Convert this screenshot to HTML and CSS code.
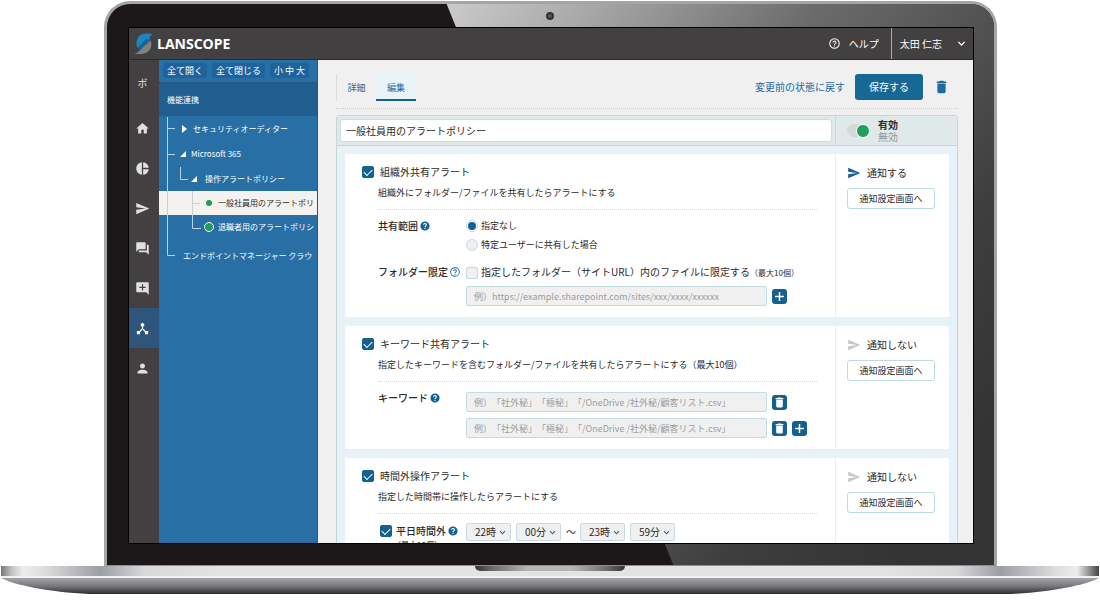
FILE: index.html
```html
<!DOCTYPE html>
<html lang="ja">
<head>
<meta charset="utf-8">
<meta name="viewport" content="width=device-width, initial-scale=1">
<title>LANSCOPE</title>
<link rel="stylesheet" href="styles.css">
</head>
<body>
<svg class="defs" aria-hidden="true">
  <symbol id="i-home" viewBox="0 0 24 24"><path d="M10 20v-6h4v6h5v-8h3L12 3 2 12h3v8z"/></symbol>
  <symbol id="i-pie" viewBox="0 0 24 24"><path d="M11 2v20c-5.07-.5-9-4.79-9-10s3.93-9.5 9-10zm2.03 0v8.99H22c-.47-4.74-4.24-8.52-8.97-8.99zm0 11.01V22c4.74-.47 8.5-4.25 8.97-8.99z"/></symbol>
  <symbol id="i-send" viewBox="0 0 24 24"><path d="M2.01 21L23 12 2.01 3 2 10l15 2-15 2z"/></symbol>
  <symbol id="i-forum" viewBox="0 0 24 24"><path d="M21 6h-2v9H6v2c0 .55.45 1 1 1h11l4 4V7c0-.55-.45-1-1-1zm-4 6V3c0-.55-.45-1-1-1H3c-.55 0-1 .45-1 1v14l4-4h10c.55 0 1-.45 1-1z"/></symbol>
  <symbol id="i-addchat" viewBox="0 0 24 24"><path d="M22 4c0-1.1-.9-2-2-2H4c-1.1 0-2 .9-2 2v12c0 1.1.9 2 2 2h14l4 4zM17 11h-4v4h-2v-4H7V9h4V5h2v4h4z"/></symbol>
  <symbol id="i-hub" viewBox="0 0 24 24"><path d="M17 16l-4-4V8.82C14.16 8.4 15 7.3 15 6c0-1.66-1.34-3-3-3S9 4.34 9 6c0 1.3.84 2.4 2 2.82V12l-4 4H3v5h5v-3.05l4-4.2 4 4.2V21h5v-5z"/></symbol>
  <symbol id="i-person" viewBox="0 0 24 24"><path d="M12 12c2.21 0 4-1.79 4-4s-1.79-4-4-4-4 1.79-4 4 1.79 4 4 4zm0 2c-2.67 0-8 1.34-8 4v2h16v-2c0-2.66-5.33-4-8-4z"/></symbol>
  <symbol id="i-trash" viewBox="4 2 16 20"><path d="M6 19c0 1.100.9 2 2 2h8c1.100 0 2-.9 2-2V7H6zM19 4h-3.500l-1-1h-5l-1 1H5v2h14z"/></symbol>
  <symbol id="i-help" viewBox="0 0 24 24"><path d="M12 1a11 11 0 1 0 0 22 11 11 0 0 0 0-22zm1.200 18h-2.500v-2.500h2.500zm2.300-7.500l-.9.900c-.8.800-1.300 1.400-1.300 2.800h-2.600v-.6c0-1.100.5-2.100 1.200-2.800l1.200-1.300c.4-.3.600-.8.600-1.400 0-1.100-.9-1.900-1.900-1.900s-2 .8-2 1.900H7.300c0-2.400 2.100-4.400 4.700-4.400s4.600 2 4.600 4.300c0 1-.4 1.800-1.100 2.500z"/></symbol>
  <symbol id="i-helpo" viewBox="1 1 22 22"><path d="M11 18h2v-2h-2zm1-16.500a10.500 10.500 0 1 0 0 21 10.500 10.500 0 0 0 0-21zm0 19a8.500 8.500 0 1 1 0-17 8.500 8.500 0 0 1 0 17zm0-14.500c-2.210 0-4 1.790-4 4h2c0-1.100.9-2 2-2s2 .9 2 2c0 2-3 1.750-3 5h2c0-2.250 3-2.500 3-5 0-2.210-1.790-4-4-4z"/></symbol>
  <symbol id="i-plus" viewBox="0 0 12 12"><path d="M5.200 1.200h1.600v4h4v1.600h-4v4H5.200v-4h-4V5.200h4z"/></symbol>
  <symbol id="i-chev" viewBox="0 0 10 10"><path d="M1.500 3.200L5 6.800l3.500-3.600" fill="none" stroke="currentColor" stroke-width="1.500"/></symbol>
</svg>

<div class="laptop">
  <div class="lid">
    <svg class="glare" viewBox="0 0 888 562" preserveAspectRatio="none" aria-hidden="true">
      <defs>
        <linearGradient id="shine" gradientUnits="userSpaceOnUse" x1="343" y1="0" x2="893" y2="400">
          <stop offset="0" stop-color="#cacaca"/><stop offset=".155" stop-color="#ababab"/><stop offset=".44" stop-color="#6b6b6b"/>
          <stop offset=".65" stop-color="#525252"/><stop offset=".73" stop-color="#484848"/><stop offset=".81" stop-color="#3e3e3e"/><stop offset="1" stop-color="#343434"/>
        </linearGradient>
      </defs>
      <path d="M340 0H888V562H567z" fill="url(#shine)"/>
    </svg>
    <div class="camera"></div>
    <div class="screen">
      <header class="topbar">
        <div class="brand">
          <svg class="logo" viewBox="0 0 19 22" aria-hidden="true">
            <path d="M16.500 7.500c2 4.200.5 9.200-3 11.500-3 2-7 2.300-13 1.800 3-1 4.500-2.300 6-4.300z" fill="#7f827f"/>
            <path d="M18.500 1C12 0 8 .5 5.600 2.800 2.500 5.800 1.500 10.500 3.500 14.700l2.800 2L15.500 7.500c-.4-2.500.6-4.500 3-6.500z" fill="#1d87c4"/>
            <path d="M3.500 14.700l9.200-9.200 2.800 2-9.200 9.200z" fill="#176596"/>
          </svg>
          <span class="brand-name">LANSCOPE</span>
        </div>
        <a class="help-link" href="#"><svg class="ic12"><use href="#i-helpo"/></svg>ヘルプ</a>
        <button class="user" type="button">太田 仁志<svg class="ic9"><use href="#i-chev"/></svg></button>
      </header>
      <div class="body">
        <nav class="rail">
          <a class="rail-first" href="#">ボ</a>
          <a href="#" aria-label="ホーム"><svg><use href="#i-home"/></svg></a>
          <a href="#" aria-label="レポート"><svg><use href="#i-pie"/></svg></a>
          <a href="#" aria-label="送信"><svg><use href="#i-send"/></svg></a>
          <a href="#" aria-label="チャット"><svg><use href="#i-forum"/></svg></a>
          <a href="#" aria-label="追加"><svg><use href="#i-addchat"/></svg></a>
          <a class="active" href="#" aria-label="連携"><svg><use href="#i-hub"/></svg></a>
          <a href="#" aria-label="アカウント"><svg><use href="#i-person"/></svg></a>
        </nav>
        <aside class="tree">
          <div class="tree-tools">
            <button type="button">全て開く</button>
            <button type="button">全て閉じる</button>
            <button class="sizes" type="button">小 中 大</button>
          </div>
          <h2 class="tree-head">機能連携</h2>
          <div class="tree-body">
            <a class="node n1" href="#"><svg class="mark" viewBox="0 0 7 8"><path d="M1 0l5 4-5 4z"/></svg>セキュリティオーディター</a>
            <a class="node n2" href="#"><svg class="mark" viewBox="0 0 7 8"><path d="M6 1v6H0z"/></svg>Microsoft 365</a>
            <a class="node n3" href="#"><svg class="mark" viewBox="0 0 7 8"><path d="M6 1v6H0z"/></svg>操作アラートポリシー</a>
            <a class="node n4 selected" href="#"><span class="dot"></span>一般社員用のアラートポリ</a>
            <a class="node n4" href="#"><span class="dot ring"></span>退職者用のアラートポリシ</a>
            <a class="node n5" href="#">エンドポイントマネージャー クラウ</a>
            <svg class="guides" viewBox="0 0 50 150" aria-hidden="true">
              <path d="M8.500 1V139.500H16M8.500 12.500H16M8.500 38.500H16M21.500 51V63.500H29M33.500 99V112.500H42" stroke="#b9d2e6"/>
              <path d="M8.500 75V99M33.500 75V99M33.500 87.500H41" stroke="#c9cfd2"/>
            </svg>
          </div>
        </aside>
        <main class="main">
          <div class="toolbar">
            <a class="tab" href="#">詳細</a>
            <a class="tab current" href="#">編集</a>
            <a class="revert" href="#">変更前の状態に戻す</a>
            <button class="save" type="button">保存する</button>
            <button class="delete" type="button" aria-label="削除"><svg><use href="#i-trash"/></svg></button>
          </div>
          <section class="panel">
            <div class="panel-head">
              <div class="name-cell"><input class="name" type="text" value="一般社員用のアラートポリシー" aria-label="ポリシー名"></div>
              <div class="state-cell">
                <input class="switch" id="enabled" type="checkbox" role="switch" checked>
                <label class="state" for="enabled"><b>有効</b><span>無効</span></label>
              </div>
            </div>
            <div class="cards">
              <article class="card">
                <div class="card-main">
                  <label class="card-title"><input class="check" type="checkbox" checked>組織外共有アラート</label>
                  <p class="desc">組織外にフォルダー/ファイルを共有したらアラートにする</p>
                  <div class="fields">
                    <div class="label">共有範囲<svg class="ic10"><use href="#i-help"/></svg></div>
                    <div class="stack radios">
                      <label class="opt"><input class="radio" type="radio" name="range" checked>指定なし</label>
                      <label class="opt"><input class="radio" type="radio" name="range">特定ユーザーに共有した場合</label>
                    </div>
                    <div class="label">フォルダー限定<svg class="ic10"><use href="#i-helpo"/></svg></div>
                    <div class="stack">
                      <label class="opt wide"><input class="check" type="checkbox"><span>指定したフォルダー（サイトURL）内のファイルに限定する<small>（最大10個）</small></span></label>
                      <div class="entry"><input class="text" type="text" placeholder="例）https://example.sharepoint.com/sites/xxx/xxxx/xxxxxx" aria-label="サイトURL"><button class="sq" type="button" aria-label="追加"><svg><use href="#i-plus"/></svg></button></div>
                    </div>
                  </div>
                </div>
                <div class="card-side">
                  <p class="notify on"><svg class="ic14"><use href="#i-send"/></svg>通知する</p>
                  <button class="goto" type="button">通知設定画面へ</button>
                </div>
              </article>

              <article class="card">
                <div class="card-main">
                  <label class="card-title"><input class="check" type="checkbox" checked>キーワード共有アラート</label>
                  <p class="desc">指定したキーワードを含むフォルダー/ファイルを共有したらアラートにする（最大10個）</p>
                  <div class="fields">
                    <div class="label">キーワード<svg class="ic10"><use href="#i-help"/></svg></div>
                    <div class="stack entries">
                      <div class="entry"><input class="text" type="text" placeholder="例）「社外秘」「極秘」「/OneDrive /社外秘/顧客リスト.csv」" aria-label="キーワード1"><button class="sq" type="button" aria-label="削除"><svg><use href="#i-trash"/></svg></button></div>
                      <div class="entry"><input class="text" type="text" placeholder="例）「社外秘」「極秘」「/OneDrive /社外秘/顧客リスト.csv」" aria-label="キーワード2"><button class="sq" type="button" aria-label="削除"><svg><use href="#i-trash"/></svg></button><button class="sq" type="button" aria-label="追加"><svg><use href="#i-plus"/></svg></button></div>
                    </div>
                  </div>
                </div>
                <div class="card-side">
                  <p class="notify"><svg class="ic14"><use href="#i-send"/></svg>通知しない</p>
                  <button class="goto" type="button">通知設定画面へ</button>
                </div>
              </article>

              <article class="card">
                <div class="card-main">
                  <label class="card-title"><input class="check" type="checkbox" checked>時間外操作アラート</label>
                  <p class="desc">指定した時間帯に操作したらアラートにする</p>
                  <div class="fields">
                    <div class="label with-check">
                      <label><input class="check" type="checkbox" checked>平日時間外</label><svg class="ic10"><use href="#i-help"/></svg>
                      <small>（最大10個）</small>
                    </div>
                    <div class="times">
                      <span class="pick"><select aria-label="開始時"><option>22時</option></select><svg class="ic7"><use href="#i-chev"/></svg></span>
                      <span class="pick"><select aria-label="開始分"><option>00分</option></select><svg class="ic7"><use href="#i-chev"/></svg></span>
                      <span class="tilde">～</span>
                      <span class="pick"><select aria-label="終了時"><option>23時</option></select><svg class="ic7"><use href="#i-chev"/></svg></span>
                      <span class="pick"><select aria-label="終了分"><option>59分</option></select><svg class="ic7"><use href="#i-chev"/></svg></span>
                    </div>
                  </div>
                </div>
                <div class="card-side">
                  <p class="notify"><svg class="ic14"><use href="#i-send"/></svg>通知しない</p>
                  <button class="goto" type="button">通知設定画面へ</button>
                </div>
              </article>
            </div>
          </section>
        </main>
      </div>
    </div>
  </div>
  <div class="base"><div class="notch"></div>
    <div class="deck"></div>
    <svg class="under" viewBox="0 0 1098 16" preserveAspectRatio="none" aria-hidden="true">
      <defs><linearGradient id="under" x2="0" y2="1"><stop offset="0" stop-color="#a3a4a8"/><stop offset=".5" stop-color="#77787a"/><stop offset="1" stop-color="#2e2e2e"/></linearGradient></defs>
      <path d="M0 0H1098C1085 7 1050 14 1010 16H88C48 14 13 7 0 0z" fill="url(#under)"/>
    </svg>
  </div>
</div>
</body>
</html>
```

FILE: styles.css
```css
* { box-sizing: border-box; }
body {
  margin: 0;
  background: #fff;
  color: #2b2b2b;
  font: 10px/18px "Noto Sans CJK JP", "Noto Sans", sans-serif;
  text-spacing-trim: space-all;
}
h2, p { margin: 0; font-size: inherit; font-weight: inherit; }
a { color: inherit; text-decoration: none; }
button, input, select { font: inherit; color: inherit; margin: 0; padding: 0; text-spacing-trim: inherit; }
button { display: flex; align-items: center; justify-content: center; border: 0; background: none; cursor: pointer; white-space: nowrap; }
svg { display: block; flex: none; fill: currentColor; }
.defs { position: absolute; width: 0; height: 0; }

/* Laptop frame */
.laptop { display: flex; flex-direction: column; height: 100vh; padding: 1px 1px 22px; }
.lid {
  position: relative;
  display: flex;
  flex: 1;
  min-height: 0;
  margin: 0 102px 0 103px;
  padding: 23px 20px 21px 21px;
  border: 3px solid #a5a5a5;
  border-bottom: 1px solid #8d8d8d;
  border-radius: 26px 26px 0 0;
  background: #1c1718;
  overflow: hidden;
}
.glare { position: absolute; inset: 0; width: 100%; height: 100%; }
.camera {
  position: absolute;
  top: 8px;
  left: 50%;
  width: 8px;
  height: 8px;
  margin-left: -5px;
  border: 2px solid #333;
  border-radius: 50%;
  background: #555;
}
.screen {
  position: relative;
  display: flex;
  flex: 1;
  flex-direction: column;
  min-width: 0;
  border: 1px solid #000;
  background: #434041;
  overflow: hidden;
}
.base { position: relative; }
.deck {
  height: 12px;
  border-bottom: 2px solid #f0f0f2;
  background: linear-gradient(90deg, #777 0, #c4c4c4 1%, #ededed 2%, #dcdcdc 4%, #9b9ea3 9%, #d8d8da 13%, #e3e3e6 20%, #e3e3e6 80%, #d8d8da 87%, #9b9ea3 91%, #dcdcdc 96%, #ededed 98%, #999 99%, #444 100%);
}
.under { width: 100%; height: 16px; }
.notch {
  position: absolute;
  top: 0;
  left: 50%;
  width: 150px;
  height: 5px;
  margin-left: -75px;
  border-radius: 0 0 6px 6px;
  background: linear-gradient(90deg, #333, #6d6d6d 12%, #b5b5b7 35%, #b5b5b7 65%, #6d6d6d 88%, #333);
}

/* Top bar */
.topbar { display: flex; flex: none; height: 32px; border-bottom: 1px solid #2c2a2b; color: #fff; }
.brand { display: flex; flex: 1; align-items: center; gap: 4px; padding-left: 5px; }
.logo { width: 19px; height: 22px; }
.brand-name { font: 700 14px/20px "Open Sans", sans-serif; }
.help-link { display: flex; align-items: center; gap: 9px; padding-right: 12px; }
.user { gap: 15px; padding: 0 7px 0 8px; border-left: 1px solid #aaa; }
.ic7 { width: 7px; height: 7px; }
.ic9 { width: 9px; height: 9px; }
.ic10 { width: 10px; height: 10px; color: #14629a; }
.ic12 { width: 11px; height: 11px; }
.ic14 { width: 14px; height: 14px; }

.body { display: flex; flex: 1; min-height: 0; }
.rail { flex: none; width: 30px; color: #e0e0e0; }
.rail a { display: flex; align-items: center; justify-content: center; height: 40px; padding-right: 3px; }
.rail .rail-first { height: 48px; padding-bottom: 2px; }
.rail .active { background: #30557d; color: #fff; }
.rail svg { width: 15px; height: 15px; }

/* Tree */
.tree { flex: none; width: 159px; border-right: 1px solid #1a5b92; background: #286fa5; color: #fff; font-size: 8px; overflow: hidden; white-space: nowrap; }
.tree-tools { display: flex; gap: 5px; height: 23px; padding: 3px 4px; border-bottom: 1px dotted #17466f; background: #2470a7; font-size: 9px; }
.tree-tools button { height: 15px; padding: 0 4px; border-radius: 3px; background: #1f639a; }
.tree-head { height: 33px; padding-left: 8px; background: #215f90; line-height: 33px; }
.tree-body { position: relative; }
.node { display: flex; align-items: center; height: 25px; }
.n1 { padding-left: 22px; gap: 5px; }
.n2 { padding-left: 21px; gap: 4px; }
.n3 { padding-left: 32px; gap: 7px; }
.n4 { height: 24px; padding-left: 45px; gap: 4px; }
.n5 { margin-top: 4px; padding-left: 24px; }
.selected { background: #f3f2ef; color: #2b2b2b; }
.mark { width: 7px; height: 8px; }
.dot { width: 10px; height: 10px; border: 2px solid transparent; border-radius: 50%; background: #1f9d58; background-clip: padding-box; }
.ring { border: 1px solid #fff; }
.guides { position: absolute; top: 0; left: 0; width: 50px; height: 150px; fill: none; pointer-events: none; }

/* Main */
.main { flex: 1; min-width: 0; padding: 0 15px 0 18px; background: #f0f0f0; overflow: hidden; }
.toolbar { display: flex; align-items: center; height: 49px; padding: 6px 11px 0 0; border-bottom: 1px dotted #c3d3d3; color: #1d6ba0; }
.tab { width: 40px; height: 27px; border-left: 1px solid #dcdcdc; font-size: 9px; line-height: 27px; text-align: center; }
.current { border-left: 0; border-bottom: 2px solid #145f93; background: #e8f4f8; }
.revert { margin-left: auto; }
.save { width: 68px; height: 26px; margin: 0 13px 0 10px; border-radius: 3px; background: #176895; color: #fff; }
.delete svg { width: 11px; height: 14px; }
.panel { margin-top: 6px; border: 1px solid #c8d4d6; border-radius: 3px 3px 0 0; background: #e6f2f7; }
.panel-head, .card { display: grid; grid-template-columns: minmax(0, 1fr) 114px; }
.panel-head { height: 30px; padding-right: 8px; border-bottom: 1px solid #c5d5da; background: #dfe9e9; }
.name-cell { padding: 3px; }
.name { width: 100%; height: 23px; padding: 0 5px; border: 1px solid #c9dde4; border-radius: 3px; background: #fff; }
.state-cell { display: flex; align-items: center; gap: 8px; padding-left: 11px; border-left: 1px solid #ccd8da; }
.switch { appearance: none; display: flex; justify-content: flex-end; align-items: center; width: 23px; height: 13px; border-radius: 7px; background: #d6d9d8; }
.switch::before { content: ""; width: 12px; height: 12px; border: 1px solid #fff; border-radius: 50%; background: #229e5c; }
.state { display: grid; line-height: 12px; }
.state span { color: #929898; }
.cards { display: grid; gap: 9px; padding: 8px; }
.card { border-radius: 2px; background: #fff; }
.card-main { padding: 9px 18px 11px 17px; }
.card-title { display: flex; align-items: center; gap: 6px; }
.check { appearance: none; display: grid; place-items: center; flex: none; width: 12px; height: 12px; border: 1px solid #c5dae2; border-radius: 2px; background: #f0f0f0; }
.check:checked { border-color: #14608f; background: #14608f; }
.check:checked::before { content: ""; width: 7px; height: 4px; margin-bottom: 2px; border: solid #fff; border-width: 0 0 1px 1px; transform: rotate(-45deg); }
.desc { margin: 3px 0 0 16px; padding-bottom: 7px; border-bottom: 1px dotted #d5dada; font-size: 9px; }
.fields { display: grid; grid-template-columns: 88px minmax(0, 1fr); row-gap: 9px; margin-left: 16px; padding-top: 7px; }
.label { display: flex; align-items: center; align-self: start; gap: 2px; font-weight: 500; white-space: nowrap; }
.stack { display: grid; row-gap: 4px; }
.radios { row-gap: 1px; }
.entries { row-gap: 6px; padding-top: 3px; }
.opt { display: flex; align-items: center; gap: 3px; font-size: 9px; white-space: nowrap; }
.wide { font-size: 10px; }
.opt small, .label small { font-size: 8px; }
.radio { appearance: none; display: grid; place-items: center; width: 12px; height: 12px; border: 1px solid #c5d8e2; border-radius: 50%; background: #f0f0f0; }
.radio:checked { background: #fff; }
.radio:checked::before { content: ""; width: 8px; height: 8px; border-radius: 50%; background: #14619a; }
.entry { display: flex; align-items: center; gap: 5px; }
.text { flex: 0 1 301px; min-width: 0; height: 20px; padding: 0 7px; border: 1px solid #c2dce4; border-radius: 2px; background: #f0f0f0; font-size: 9px; }
.text::placeholder { color: #9c9c9c; opacity: 1; }
.sq { flex: none; width: 15px; height: 15px; border-radius: 3px; background: #14608f; color: #fff; }
.sq svg { width: 11px; height: 11px; }
.with-check { flex-wrap: wrap; margin-left: 2px; row-gap: 0; padding-top: 1px; }
.with-check label { display: flex; align-items: center; gap: 4px; }
.with-check small { padding-left: 13px; line-height: 10px; }
.times { display: flex; align-items: center; align-self: start; gap: 5px; padding-top: 2px; }
.pick { position: relative; height: 18px; }
.pick select { display: block; appearance: none; width: 45px; height: 18px; padding: 0 8px; border: 1px solid #c5dce4; border-radius: 2px; background: #f0f0f0; line-height: 16px; }
.pick svg { position: absolute; top: 6px; right: 5px; color: #14619a; pointer-events: none; }
.tilde { width: 9px; text-align: center; }
.card-side { padding: 10px 14px 10px 11px; border-left: 1px solid #e6eff2; }
.notify { display: flex; align-items: center; gap: 6px; color: #2b2b2b; }
.notify svg { color: #c8c8c8; }
.on svg { color: #14619a; }
.goto { width: 100%; height: 21px; margin-top: 6px; border: 1px solid #bcdbe0; border-radius: 3px; background: #fff; font-size: 9px; }
```
